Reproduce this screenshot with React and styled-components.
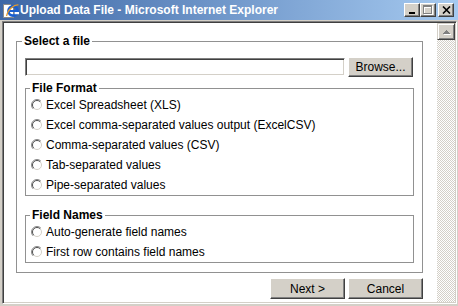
import React from "react";
import styled, { createGlobalStyle } from "styled-components";

const GlobalStyle = createGlobalStyle`
  html, body {
    margin: 0;
    padding: 0;
    background: #d4d0c8;
  }
  body {
    font-family: "Liberation Sans", Arial, sans-serif;
    font-size: 12px;
    color: #000;
  }
`;

const Window = styled.div`
  width: 458px;
  height: 306px;
  background: #d4d0c8;
  display: flex;
  flex-direction: column;
  overflow: hidden;
`;

const TitleBar = styled.div`
  height: 20px;
  flex: none;
  display: flex;
  align-items: center;
  padding: 0 4px 0 3px;
  background: linear-gradient(to right, #3d67a6, #a6caf0);
`;

const TitleText = styled.div`
  flex: 1;
  margin-left: 1px;
  color: #fff;
  font-weight: bold;
  font-size: 12px;
  white-space: nowrap;
`;

const CaptionButton = styled.div`
  width: 16px;
  height: 14px;
  box-sizing: border-box;
  margin-left: ${(p) => p.gap || 0}px;
  background: #d4d0c8;
  border: 1px solid;
  border-color: #fff #404040 #404040 #fff;
  box-shadow: inset -1px -1px #808080;
  display: flex;
  align-items: center;
  justify-content: center;
`;

const Frame = styled.div`
  flex: 1;
  min-height: 0;
  display: flex;
  margin: 1px 1px 2px 2px;
  padding: 1px;
  border: 1px solid;
  border-color: #808080 #fff #fff #808080;
  box-shadow: inset 1px 1px #404040, inset -1px -1px #d4d0c8;
`;

const Content = styled.div`
  flex: 1;
  background: #fff;
  padding: 11px 14px 0 12px;
  display: flex;
  flex-direction: column;
`;

const Scrollbar = styled.div`
  width: 18px;
  flex: none;
  display: flex;
  flex-direction: column;
  background-image: conic-gradient(#fff 25%, #d4d0c8 0 50%, #fff 0 75%, #d4d0c8 0);
  background-size: 2px 2px;
`;

const ScrollButton = styled.div`
  height: 17px;
  box-sizing: border-box;
  background: #d4d0c8;
  border: 1px solid;
  border-color: #d4d0c8 #404040 #404040 #d4d0c8;
  box-shadow: inset 1px 1px #fff, inset -1px -1px #808080;
  display: flex;
  align-items: center;
  justify-content: center;
`;

const Group = styled.fieldset`
  margin: ${(p) => p.top || 0}px 0 0 0;
  padding: ${(p) => p.pad};
  border: 1px solid #919191;
  min-inline-size: 0;
`;

const Legend = styled.legend`
  font-weight: bold;
  font-size: 12px;
  line-height: 14px;
  padding: 0 2px;
  margin-left: ${(p) => p.shift}px;
`;

const FileRow = styled.div`
  display: flex;
  align-items: center;
  gap: 3px;
  height: 20px;
`;

const TextInput = styled.input`
  width: 320px;
  height: 18px;
  box-sizing: border-box;
  margin: 0;
  padding: 0 3px;
  border: 1px solid;
  border-color: #808080 #fff #fff #808080;
  box-shadow: inset 1px 1px #404040, inset -1px -1px #d4d0c8;
  background: #fff;
  font: 12px "Liberation Sans", Arial, sans-serif;
  outline: none;
`;

const Button = styled.button`
  width: ${(p) => p.w}px;
  height: ${(p) => p.h}px;
  box-sizing: border-box;
  margin: 0;
  padding: 0;
  background: #d4d0c8;
  border: 1px solid;
  border-color: #fff #404040 #404040 #fff;
  box-shadow: inset -1px -1px #808080;
  font: 12px "Liberation Sans", Arial, sans-serif;
  color: #000;
`;

const RadioRow = styled.label`
  display: flex;
  align-items: center;
  gap: 3px;
  height: 20px;
  white-space: nowrap;
`;

const ButtonBar = styled.div`
  display: flex;
  justify-content: flex-end;
  gap: 3px;
  margin-top: 5px;
`;

const Radio = () => (
  <svg width="12" height="12" viewBox="0 0 12 12">
    <circle cx="6" cy="6" r="5" fill="#fff" />
    <path d="M2.1 9.9 A5.5 5.5 0 0 1 9.9 2.1" fill="none" stroke="#8a8a8a" />
    <path d="M2.8 9.2 A4.5 4.5 0 0 1 9.2 2.8" fill="none" stroke="#505050" />
    <path d="M9.2 2.8 A4.5 4.5 0 0 1 2.8 9.2" fill="none" stroke="#d4d0c8" />
  </svg>
);

const IeIcon = () => (
  <svg width="16" height="16" viewBox="0 0 16 16">
    <path d="M0.5 2.5 H7.5 L10.5 5.5 V15.5 H0.5 Z" fill="#fff" stroke="#8a8a8a" />
    <circle cx="10" cy="9" r="4.6" fill="none" stroke="#1a5fd0" strokeWidth="2.6" />
    <rect x="5.5" y="8" width="9" height="2" fill="#1a5fd0" />
    <rect x="11.6" y="10" width="4.4" height="2.2" fill="#fff" />
    <path d="M3.5 14 C5 7 11 2.5 15.5 3" fill="none" stroke="#e39a2c" strokeWidth="1.2" />
  </svg>
);

const MinGlyph = () => (
  <svg width="8" height="8" viewBox="0 0 8 8" shapeRendering="crispEdges">
    <rect x="1" y="6" width="6" height="2" fill="#000" />
  </svg>
);

const MaxGlyph = () => (
  <svg width="10" height="10" viewBox="0 0 10 10" shapeRendering="crispEdges">
    <path d="M1.5 2.5 H9.5 V9.5 H1.5 Z M1 1 H10" fill="none" stroke="#fff" />
    <path d="M0.5 1.5 H8.5 V8.5 H0.5 Z M0 0.5 H9" fill="none" stroke="#808080" />
  </svg>
);

const CloseGlyph = () => (
  <svg width="9" height="8" viewBox="0 0 9 8">
    <path d="M1 0.5 L8 7.5 M8 0.5 L1 7.5" stroke="#000" strokeWidth="1.6" />
  </svg>
);

const UpArrow = () => (
  <svg width="9" height="6" viewBox="0 0 9 6" shapeRendering="crispEdges">
    <path d="M4.5 1 L8 5 H1 Z" fill="#fff" transform="translate(1 1)" />
    <path d="M4.5 0.5 L8 4.5 H1 Z" fill="#808080" />
  </svg>
);

const formats = [
  "Excel Spreadsheet (XLS)",
  "Excel comma-separated values output (ExcelCSV)",
  "Comma-separated values (CSV)",
  "Tab-separated values",
  "Pipe-separated values",
];

const fieldNames = ["Auto-generate field names", "First row contains field names"];

export default function App() {
  return (
    <>
      <GlobalStyle />
      <Window>
        <TitleBar>
          <IeIcon />
          <TitleText>Upload Data File - Microsoft Internet Explorer</TitleText>
          <CaptionButton>
            <MinGlyph />
          </CaptionButton>
          <CaptionButton>
            <MaxGlyph />
          </CaptionButton>
          <CaptionButton gap={2}>
            <CloseGlyph />
          </CaptionButton>
        </TitleBar>
        <Frame>
          <Content>
            <Group pad="9px 8px 9px 8px">
              <Legend shift={-3}>Select a file</Legend>
              <FileRow>
                <TextInput type="text" />
                <Button w={65} h={20}>Browse...</Button>
              </FileRow>
              <Group top={4} pad="0 5px 0 5px">
                <Legend shift={-1}>File Format</Legend>
                {formats.map((f) => (
                  <RadioRow key={f}>
                    <Radio />
                    {f}
                  </RadioRow>
                ))}
              </Group>
              <Group top={12} pad="0 5px 0 5px">
                <Legend shift={-1}>Field Names</Legend>
                {fieldNames.map((f) => (
                  <RadioRow key={f}>
                    <Radio />
                    {f}
                  </RadioRow>
                ))}
              </Group>
            </Group>
            <ButtonBar>
              <Button w={75} h={21}>Next &gt;</Button>
              <Button w={75} h={21}>Cancel</Button>
            </ButtonBar>
          </Content>
          <Scrollbar>
            <ScrollButton>
              <UpArrow />
            </ScrollButton>
          </Scrollbar>
        </Frame>
      </Window>
    </>
  );
}
